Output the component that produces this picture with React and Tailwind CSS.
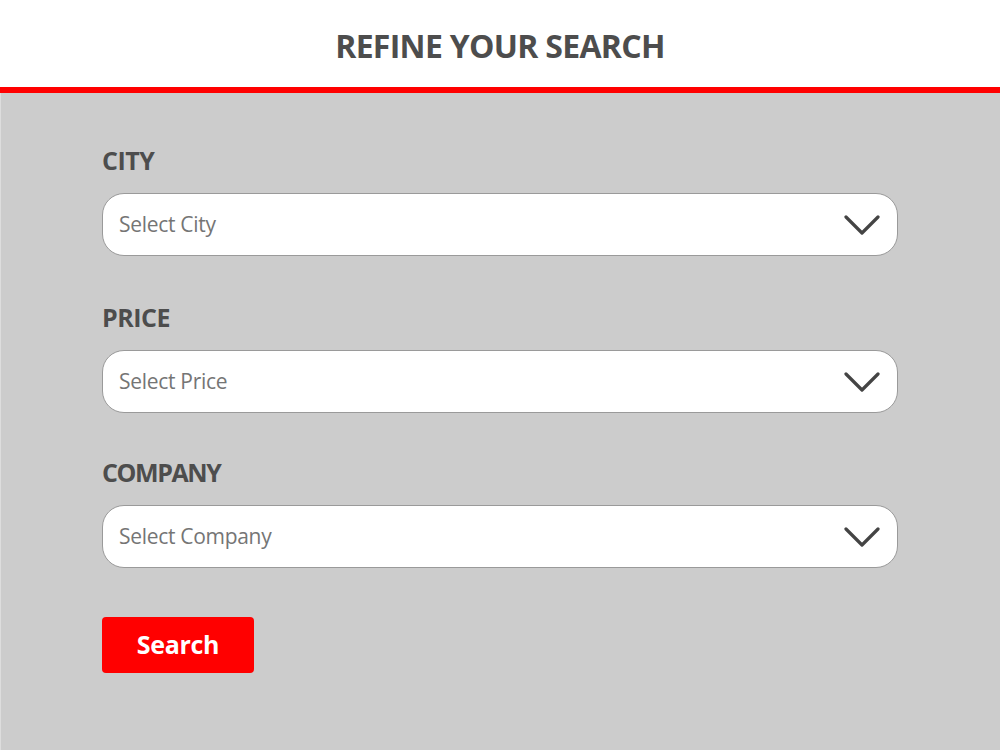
import React from "react";

function Chevron() {
  return (
    <svg width="36" height="22" viewBox="0 0 36 22" fill="none" className="shrink-0">
      <path d="M2 3 L18 19 L34 3" stroke="#444444" strokeWidth="3.2" strokeLinecap="round" strokeLinejoin="round" />
    </svg>
  );
}

function Field({ label, placeholder, labelClass, trackClass }) {
  return (
    <div className={labelClass}>
      <div className={`text-[25px] leading-[32px] font-bold text-[#4d4d4d] ${trackClass || "tracking-[-0.5px]"}`}>{label}</div>
      <div className="mt-[17px] h-[63px] bg-white rounded-[22px] border border-[#9a9a9a] flex items-center justify-between pl-[16px] pr-[17px]">
        <span className="text-[21px] text-[#757575] tracking-[-0.3px]">{placeholder}</span>
        <Chevron />
      </div>
    </div>
  );
}

export default function App() {
  return (
    <div className="w-[1000px] h-[750px] flex flex-col" style={{ fontFamily: '"Open Sans", "Liberation Sans", sans-serif' }}>
      <div className="h-[87px] bg-white flex items-center justify-center">
        <h1 className="text-[32px] font-bold text-[#4d4d4d] tracking-[-0.7px] mt-[4px]">REFINE YOUR SEARCH</h1>
      </div>
      <div className="h-[6px] bg-[#ff0000]" />
      <div className="flex-1 bg-[#cccccc] border-l border-[#dddddd] pl-[101px] pr-[102px] pt-[51px] flex flex-col">
        <Field label="CITY" placeholder="Select City" />
        <Field label="PRICE" placeholder="Select Price" labelClass="mt-[45px]" />
        <Field label="COMPANY" placeholder="Select Company" labelClass="mt-[43px]" trackClass="tracking-[-1.4px]" />
        <div className="mt-[49px]">
          <button className="w-[152px] h-[56px] bg-[#ff0000] rounded-[4px] text-white text-[25px] font-bold tracking-[-0.3px] flex items-center justify-center">Search</button>
        </div>
      </div>
    </div>
  );
}
